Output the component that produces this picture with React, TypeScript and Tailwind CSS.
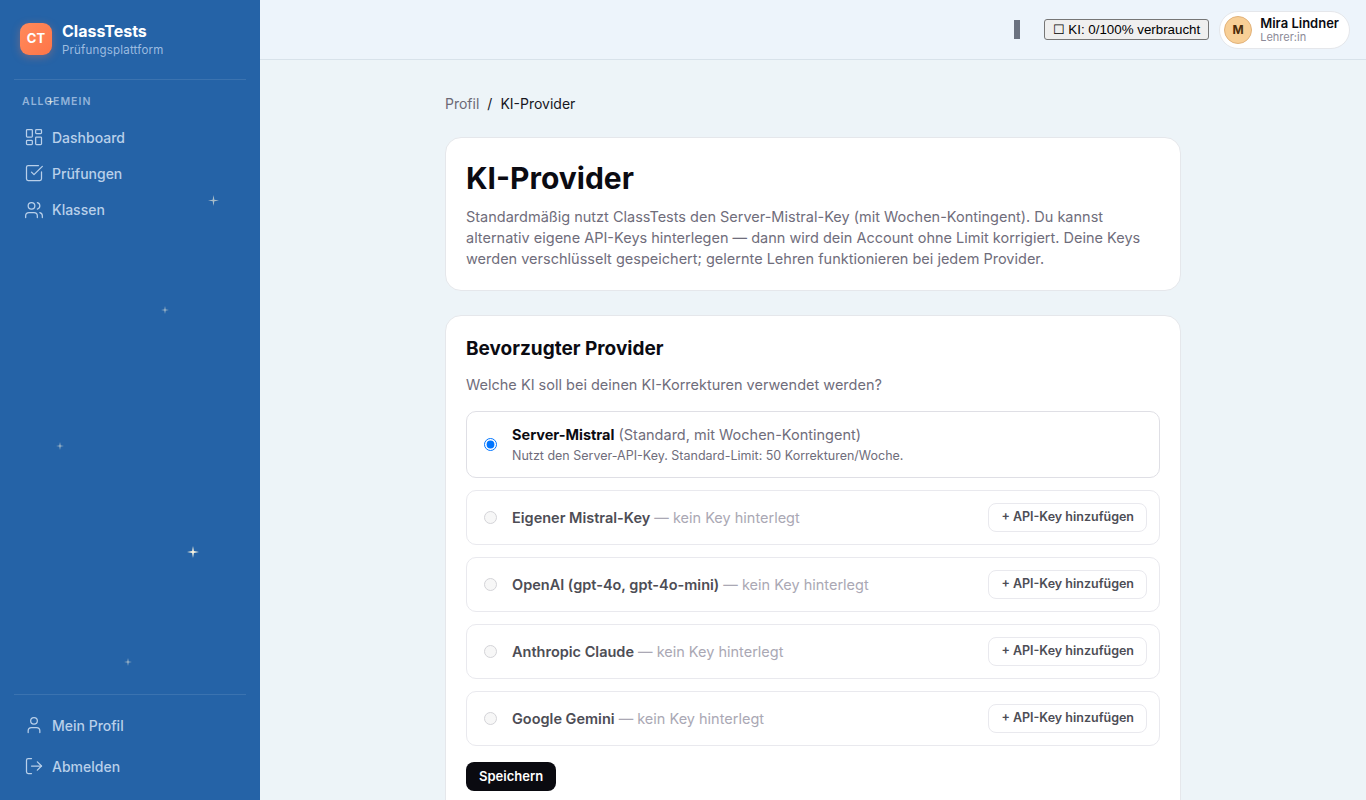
import { LayoutDashboard, SquareCheckBig, Users, User, LogOut, type LucideIcon } from "lucide-react";

const stars = [
  { x: 50, y: 101, size: 9, className: "opacity-70" },
  { x: 213, y: 200, size: 11, className: "opacity-60" },
  { x: 165, y: 310, size: 8, className: "opacity-60" },
  { x: 60, y: 446, size: 8, className: "opacity-60" },
  { x: 193, y: 552, size: 12, className: "opacity-95" },
  { x: 128, y: 662, size: 8, className: "opacity-60" },
];

const Star = ({ x, y, size, className }: { x: number; y: number; size: number; className: string }) => (
  <svg
    viewBox="0 0 24 24"
    width={size}
    height={size}
    className={`absolute text-[#fff8e1] ${className}`}
    style={{ left: x - size / 2, top: y - size / 2 }}
  >
    <path fill="currentColor" d="M12 0 L13.8 10.2 L24 12 L13.8 13.8 L12 24 L10.2 13.8 L0 12 L10.2 10.2 Z" />
  </svg>
);

const NavItem = ({ icon: Icon, label, className }: { icon: LucideIcon; label: string; className: string }) => (
  <div className={`flex items-center gap-[8px] pl-[24px] text-[14px] font-medium text-[#b9d0ea] ${className}`}>
    <Icon size={20} strokeWidth={1.5} className="text-[#b9d0ea] shrink-0" />
    <span className="ml-[0px]">{label}</span>
  </div>
);

const Sidebar = () => (
  <aside className="relative flex h-[800px] w-[260px] shrink-0 flex-col bg-[#2563a7]">
    {stars.map((s) => (
      <Star key={`${s.x}-${s.y}`} {...s} />
    ))}
    <div className="mx-[14px] flex h-[80px] items-center gap-[10px] border-b border-white/10 px-[6px] pb-[1px]">
      <div className="flex h-[32px] w-[32px] items-center justify-center rounded-[9px] bg-gradient-to-br from-[#ff8a5c] to-[#ff7547] text-[13px] font-bold text-white shadow-[0_2px_8px_rgba(255,122,77,0.35)]">
        CT
      </div>
      <div>
        <div className="text-[16px] leading-[22px] font-bold text-white">ClassTests</div>
        <div className="text-[11.5px] leading-[16px] tracking-[0.2px] text-[#9dbce0]">Prüfungsplattform</div>
      </div>
    </div>
    <div className="mt-[15px] pl-[22px] text-[10.5px] leading-[14px] font-semibold tracking-[1px] text-[#93b4da]">ALLGEMEIN</div>
    <NavItem icon={LayoutDashboard} label="Dashboard" className="mt-[10px] h-[36px]" />
    <NavItem icon={SquareCheckBig} label="Prüfungen" className="h-[36px]" />
    <NavItem icon={Users} label="Klassen" className="h-[37px]" />
    <div className="mx-[14px] mt-auto border-t border-white/10 pt-[10px] pb-[14px]">
      <NavItem icon={User} label="Mein Profil" className="-mx-[14px] h-[40px]" />
      <NavItem icon={LogOut} label="Abmelden" className="-mx-[14px] mt-[1px] h-[40px]" />
    </div>
  </aside>
);

const Header = () => (
  <header className="flex h-[60px] items-center justify-end border-b border-[#d8e2ea] bg-[#edf4fb] pr-[16px]">
    <div className="mr-[24px] h-[19px] w-[6px] bg-[#6b7280]" />
    <button className="mr-[10px] h-[21px] rounded-[3px] border border-[#767676] bg-[#efefef] px-[8px] font-['Liberation_Sans',sans-serif] text-[13.33px] leading-none text-black">
      ☐ KI: 0/100% verbraucht
    </button>
    <div className="flex h-[38px] items-center gap-[8px] rounded-full border border-[#e5e7eb] bg-white pr-[10px] pl-[4px]">
      <div className="flex h-[28px] w-[28px] items-center justify-center rounded-full border border-[#e2b27a] bg-[#f8cf96] text-[12px] font-bold text-[#4a2c0a]">
        M
      </div>
      <div>
        <div className="text-[13px] leading-[15px] font-semibold text-[#0b0b12]">Mira Lindner</div>
        <div className="text-[11px] leading-[12px] text-[#8c8a98]">Lehrer:in</div>
      </div>
    </div>
  </header>
);

const providers = [
  { name: "Eigener Mistral-Key" },
  { name: "OpenAI (gpt-4o, gpt-4o-mini)" },
  { name: "Anthropic Claude" },
  { name: "Google Gemini" },
];

const ProviderRow = ({ name }: { name: string }) => (
  <div className="flex h-[55px] items-center justify-between rounded-[10px] border border-[#e9e9ee] pr-[12px] pl-[17px]">
    <div className="flex items-center gap-[15px]">
      <span className="h-[13px] w-[13px] rounded-full border border-[#d4d4d8] bg-[#f7f7f7]" />
      <div className="text-[14.5px]">
        <span className="font-semibold text-[#4d4d55]">{name}</span>
        <span className="text-[#aaa8b4]"> — kein Key hinterlegt</span>
      </div>
    </div>
    <button className="h-[29px] rounded-[8px] border border-[#e9e9ee] bg-white px-[12px] text-[12.5px] font-semibold text-[#4d4d55]">
      + API-Key hinzufügen
    </button>
  </div>
);

export default function App() {
  return (
    <div className="flex h-[800px] overflow-hidden bg-[#edf4f8] font-['Inter',sans-serif]">
      <Sidebar />
      <div className="min-w-0 flex-1">
        <Header />
        <main className="mx-auto w-[736px]">
          <div className="mt-[33px] flex h-[20px] items-center gap-[8px] text-[14px]">
            <span className="text-[#6b6975]">Profil</span>
            <span className="text-[#17171f]">/</span>
            <span className="text-[#17171f]">KI-Provider</span>
          </div>
          <section className="mt-[24px] h-[154px] rounded-[16px] border border-[#e5e7eb] bg-white px-[20px] pt-[20px]">
            <h1 className="text-[30px] leading-[40px] font-bold text-[#0b0b12]">KI-Provider</h1>
            <p className="mt-[8px] text-[14.5px] leading-[21px] text-[#6f6d7b]">
              Standardmäßig nutzt ClassTests den Server-Mistral-Key (mit Wochen-Kontingent). Du kannst alternativ eigene
              API-Keys hinterlegen — dann wird dein Account ohne Limit korrigiert. Deine Keys werden verschlüsselt
              gespeichert; gelernte Lehren funktionieren bei jedem Provider.
            </p>
          </section>
          <section className="mt-[24px] rounded-[16px] border border-[#e5e7eb] bg-white px-[20px] pt-[20px] pb-[40px]">
            <h2 className="text-[19px] leading-[26px] font-bold text-[#0b0b12]">Bevorzugter Provider</h2>
            <p className="mt-[13px] text-[14.5px] leading-[20px] text-[#6f6d7b]">Welche KI soll bei deinen KI-Korrekturen verwendet werden?</p>
            <div className="mt-[16px] flex h-[67px] items-center gap-[15px] rounded-[10px] border border-[#dfdfe5] pl-[17px]">
              <input type="radio" defaultChecked className="m-0 h-[13px] w-[13px]" />
              <div>
                <div className="text-[14.5px] leading-[20px]">
                  <span className="font-bold text-[#0b0b12]">Server-Mistral</span>
                  <span className="text-[#6f6d7b]"> (Standard, mit Wochen-Kontingent)</span>
                </div>
                <div className="mt-[2px] text-[12.5px] leading-[18px] text-[#6f6d7b]">Nutzt den Server-API-Key. Standard-Limit: 50 Korrekturen/Woche.</div>
              </div>
            </div>
            <div className="mt-[12px] flex flex-col gap-[12px]">
              {providers.map((p) => (
                <ProviderRow key={p.name} name={p.name} />
              ))}
            </div>
            <button className="mt-[16px] h-[29px] rounded-[8px] bg-[#0a0a10] px-[13px] text-[13px] font-semibold text-white">Speichern</button>
          </section>
        </main>
      </div>
    </div>
  );
}
